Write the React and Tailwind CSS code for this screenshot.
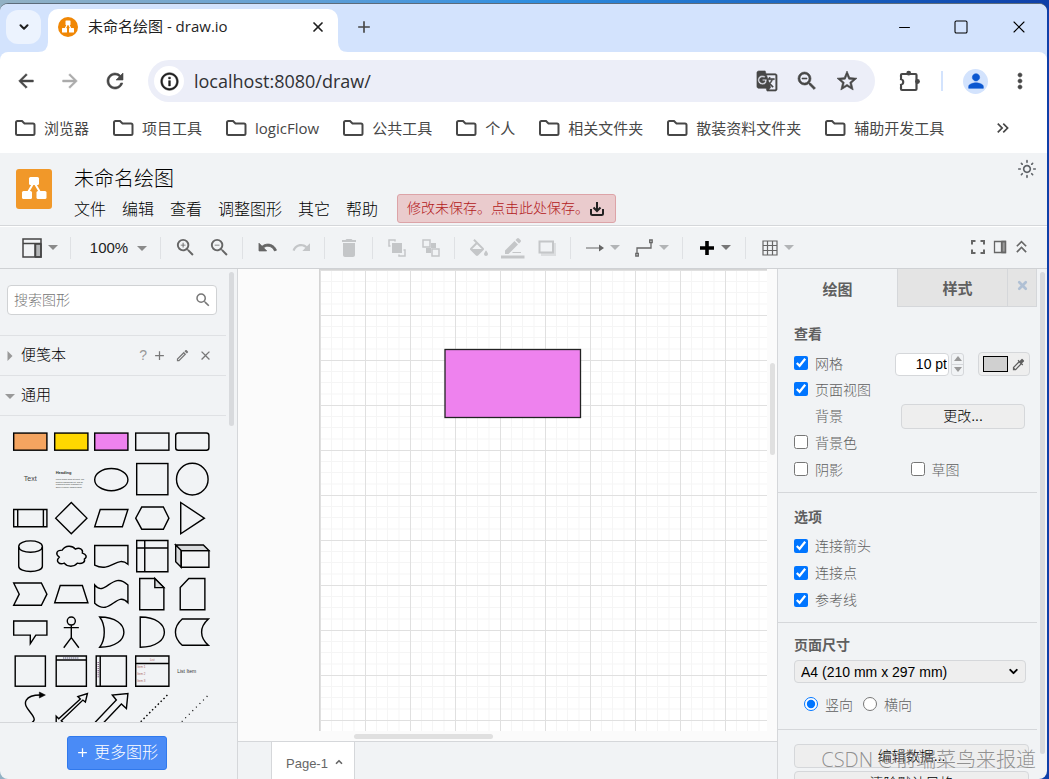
import {
  MdAdd, MdArrowBack, MdArrowForward, MdClose, MdColorize, MdDelete, MdGTranslate, MdInfoOutline,
  MdKeyboardDoubleArrowRight, MdKeyboardDoubleArrowUp, MdMoreVert, MdOutlineEdit, MdOutlineLightMode,
  MdPerson, MdRefresh, MdSearch, MdStarOutline, MdZoomIn, MdZoomOut,
} from 'react-icons/md';
import { ChevronDown, ChevronUp, Minus, Square, X } from 'lucide-react';

const bookmarks = ['浏览器', '项目工具', 'logicFlow', '公共工具', '个人', '相关文件夹', '散装资料文件夹', '辅助开发工具'];
const menus = ['文件', '编辑', '查看', '调整图形', '其它', '帮助'];

const TabFoot = ({ className }) => (
  <svg viewBox="0 0 10 10" className={`absolute bottom-0 size-[10px] fill-white ${className}`}>
    <path d="M0 10 Q10 10 10 0 V10Z" />
  </svg>
);

const Favicon = () => (
  <svg viewBox="0 0 20 20" className="size-5">
    <circle cx="10" cy="10" r="10" fill="#f08705" />
    <path d="M10 6 6.5 13M10 6l3.500 7" stroke="#fff" strokeWidth="1.300" />
    <g fill="#fff">
      <rect x="7.500" y="3.500" width="5" height="4.500" rx=".6" />
      <rect x="4" y="11" width="5" height="4.500" rx=".6" />
      <rect x="11" y="11" width="5" height="4.500" rx=".6" />
    </g>
  </svg>
);

const TabStrip = () => (
  <div className="flex h-12 items-end bg-[#d3e3fd]">
    <button aria-label="搜索标签页" className="mb-2 ml-[6px] flex h-[34px] w-[35px] items-center justify-center rounded-xl bg-[#ecf3fe]">
      <ChevronDown size={14} strokeWidth={3.5} className="text-[#1f1f1f]" />
    </button>
    <div className="relative ml-[7px] flex h-[43px] w-[290px] items-center rounded-t-[10px] bg-white pr-3 pb-2 pl-[10px]">
      <TabFoot className="-left-[10px]" />
      <TabFoot className="-right-[10px] -scale-x-100" />
      <Favicon />
      <span className="ml-[10px] flex-1 truncate text-[15px] text-[#1f1f1f]">未命名绘图 - draw.io</span>
      <button aria-label="关闭标签页"><X size={16} strokeWidth={2.6} className="text-[#1f1f1f]" /></button>
    </div>
    <button aria-label="新标签页" className="mb-[15px] ml-4"><MdAdd size={20} className="text-[#474747]" /></button>
    <div className="mr-5 mb-[15px] ml-auto flex items-center gap-10 text-black">
      <button aria-label="最小化"><Minus size={17} strokeWidth={1.5} /></button>
      <button aria-label="最大化"><Square size={16} strokeWidth={1.6} /></button>
      <button aria-label="关闭"><X size={20} strokeWidth={1.3} className="-mr-[2px]" /></button>
    </div>
  </div>
);

const AddressBar = () => (
  <div className="bg-[#d3e3fd]">
    <div className="flex h-[58px] items-center rounded-t-lg bg-white pl-[15px] text-[#474747] [&_path]:stroke-[0.6] [&_path[fill=none]]:stroke-none">
      <button aria-label="后退"><MdArrowBack size={22} /></button>
      <button aria-label="前进" className="ml-[22px] text-[#ababab]"><MdArrowForward size={22} /></button>
      <button aria-label="重新加载" className="ml-[22px]"><MdRefresh size={24} /></button>
      <div className="ml-[21px] flex h-[42px] flex-1 items-center rounded-full bg-[#eceef8] pr-4 pl-[6px]">
        <span className="flex size-[30px] items-center justify-center rounded-full bg-white text-[#1f1f1f]">
          <MdInfoOutline size={21} />
        </span>
        <input
          aria-label="地址"
          defaultValue="localhost:8080/draw/"
          className="ml-[10px] min-w-0 flex-1 bg-transparent text-[18px] text-[#303134] outline-none"
        />
        <button aria-label="翻译"><MdGTranslate size={22} /></button>
        <button aria-label="缩放" className="ml-[17px]"><MdZoomOut size={24} /></button>
        <button aria-label="收藏" className="ml-4"><MdStarOutline size={24} /></button>
      </div>
      <button aria-label="扩展程序" className="ml-6">
        <svg viewBox="0 0 22 22" className="size-[22px] fill-none stroke-current">
          <g strokeWidth="2.2">
            <rect x="2" y="4" width="15.500" height="16" rx="1" />
          </g>
          <g fill="currentColor" stroke="none">
            <circle cx="9.700" cy="3.200" r="2.400" />
            <circle cx="18.500" cy="11.500" r="2.400" />
          </g>
          <circle cx="2" cy="12" r="3.300" fill="#474747" stroke="none" />
          <rect x="-2" y="7" width="2.900" height="10" fill="#fff" stroke="none" />
          <circle cx="1.200" cy="12" r="2" fill="#fff" stroke="none" />
        </svg>
      </button>
      <span className="ml-5 h-5 w-[2px] bg-[#d3e3fd]" />
      <button aria-label="个人资料" className="ml-5 flex size-[25px] items-center justify-center rounded-full bg-[#d3e3fd] text-[#0b57d0]">
        <MdPerson size={22} />
      </button>
      <button aria-label="菜单" className="mr-[15px] ml-5"><MdMoreVert size={24} /></button>
    </div>
  </div>
);

const Bookmarks = () => (
  <nav className="flex h-[43px] items-center gap-[23px] bg-white pr-[34px] pb-[7px] pl-[14px] text-[15px] text-[#474747]">
    {bookmarks.map((name) => (
      <a key={name} href="#" className="flex shrink-0 items-center gap-2">
        <svg viewBox="0 0 22 18" className="h-[18px] w-[22px] fill-none stroke-current stroke-2">
          <path d="M2 3.500 Q2 2 3.500 2H8l2.500 2.500H19Q20.500 4.500 20.500 6V14.500Q20.500 16 19 16H3.500Q2 16 2 14.500Z" />
        </svg>
        {name}
      </a>
    ))}
    <button aria-label="更多书签" className="ml-auto"><MdKeyboardDoubleArrowRight size={20} /></button>
  </nav>
);

const Header = () => (
  <header className="flex h-[73px] border-b border-[#d5d7da] bg-[#f1f3f5] pl-4">
    <svg viewBox="0 0 36 40" className="mt-4 h-10 w-9">
      <rect width="36" height="40" rx="3" fill="#f19829" />
      <path d="M18 13 11 25M18 13l7 12" stroke="#fff" strokeWidth="2" />
      <g fill="#fff">
        <rect x="13" y="8" width="10" height="8" rx="1.500" />
        <rect x="6" y="22" width="10" height="8" rx="1.500" />
        <rect x="20.500" y="22" width="10" height="8" rx="1.500" />
      </g>
    </svg>
    <div className="ml-[22px] flex-1 pt-[11px]">
      <h1 className="text-[20px] leading-[30px] text-black">未命名绘图</h1>
      <div className="flex h-[29px] items-center">
        <nav className="flex gap-4 pt-[2px] text-[16px] text-black">
          {menus.map((name) => <a key={name} href="#">{name}</a>)}
        </nav>
        <button className="ml-[19px] flex h-[29px] items-center rounded-[3px] border border-[#dca3a7] bg-[#eacbcd] pr-[10px] pl-[9px] text-[14px] text-[#b3191b]">
          修改未保存。点击此处保存。
          <svg viewBox="0 0 16 16" className="size-4 fill-none stroke-[#222] stroke-2">
            <path d="M2 8v4.500Q2 14 3.500 14h9Q14 14 14 12.500V8M8 1v8M4.500 6.500 8 10l3.500-3.500" />
          </svg>
        </button>
      </div>
    </div>
    <button aria-label="外观" className="mt-[6px] mr-[10px] self-start text-[#5f6368]"><MdOutlineLightMode size={20} /></button>
  </header>
);

const Caret = ({ className = 'fill-[#8a8a8a]' }) => (
  <svg viewBox="0 0 10 5" className={`h-[5px] w-[10px] shrink-0 ${className}`}><path d="M0 0H10L5 5Z" /></svg>
);

const Group = ({ children, last }) => (
  <div className={`flex h-[22px] items-center pr-[6px] pl-[7px] ${last ? '' : 'border-r border-[#dfe1e4]'}`}>{children}</div>
);

const Tool = ({ label, children, off }) => (
  <button aria-label={label} className={`flex w-[34px] shrink-0 justify-center ${off ? 'text-[#c4c6c8]' : 'text-[#666]'}`}>{children}</button>
);

const DropTool = ({ label, children, caret }) => (
  <button aria-label={label} className="flex w-[49px] shrink-0 items-center justify-center gap-[6px] text-[#666]">
    {children}
    <Caret className={caret} />
  </button>
);

const Toolbar = () => (
  <div className="flex h-[43px] items-center border-t border-b border-t-white border-b-[#cfd1d4] bg-[#f1f3f5] pl-2">
    <Group>
      <DropTool label="视图">
        <svg viewBox="0 0 20 20" className="size-5 shrink-0 fill-none stroke-[#444] stroke-[1.500]">
          <path d="M13.500 6H19V19H13.500Z" fill="#b4b6b8" />
          <path d="M1 1H19V19H1ZM1 5.500H19M13 5.500V19" />
        </svg>
      </DropTool>
    </Group>
    <Group>
      <button className="flex w-[76px] items-center justify-center gap-[9px] pt-[2px] pl-[5px] text-[15px] text-[#222]">
        100%
        <Caret />
      </button>
    </Group>
    <Group>
      <Tool label="放大"><MdZoomIn size={23} /></Tool>
      <Tool label="缩小"><MdZoomOut size={23} /></Tool>
    </Group>
    <Group>
      <Tool label="撤销">
        <svg viewBox="1 2 22 20" className="h-[17px] w-[19px] fill-current">
          <path d="M12.500 8c-2.650 0-5.050 1-6.900 2.600L2 7v9h9l-3.600-3.600c1.400-1.200 3.100-1.900 5.100-1.900 3.500 0 6.500 2.300 7.600 5.500l2.400-.8C21 11 17.100 8 12.500 8Z" stroke="currentColor" />
        </svg>
      </Tool>
      <Tool label="重做" off>
        <svg viewBox="1 2 22 20" className="h-[17px] w-[19px] -scale-x-100 fill-current">
          <path d="M12.500 8c-2.650 0-5.050 1-6.900 2.600L2 7v9h9l-3.600-3.600c1.400-1.200 3.100-1.900 5.100-1.900 3.500 0 6.500 2.300 7.600 5.500l2.400-.8C21 11 17.100 8 12.500 8Z" />
        </svg>
      </Tool>
    </Group>
    <Group>
      <Tool label="删除" off><MdDelete size={24} /></Tool>
    </Group>
    <Group>
      <Tool label="移至最前" off>
        <svg viewBox="0 0 18 18" className="size-[18px] fill-none stroke-current stroke-[1.500]">
          <path d="M4 4H14V14H4Z" fill="currentColor" stroke="none" />
          <path d="M2.500 7H1V1H7V2.500M15.500 11H17V17H11V15.500" />
        </svg>
      </Tool>
      <Tool label="移至最后" off>
        <svg viewBox="0 0 18 18" className="size-[18px] fill-none stroke-current stroke-[1.500]">
          <path d="M9 4H14V9H9ZM4 9H9V14H4Z" fill="currentColor" stroke="none" />
          <path d="M1 1H8V8H1ZM10 10H17V17H10Z" fill="#f1f3f5" />
        </svg>
      </Tool>
    </Group>
    <Group>
      <Tool label="填充颜色" off>
        <svg viewBox="2 0 20 18" className="h-[18px] w-5 fill-current">
          <path d="M16.560 8.940L7.620 0 6.210 1.410l2.380 2.380-5.150 5.150c-.590.590-.590 1.540 0 2.120l5.500 5.500c.290.290.680.440 1.060.440s.770-.150 1.060-.440l5.500-5.500c.590-.580.590-1.530 0-2.120zM5.210 10L10 5.210 14.790 10H5.210zM19 11.500s-2 2.170-2 3.500c0 1.100.900 2 2 2s2-.900 2-2c0-1.330-2-3.500-2-3.500z" />
        </svg>
      </Tool>
      <Tool label="线条颜色" off>
        <svg viewBox="0 0 24 22" className="h-[22px] w-6 fill-current">
          <path d="M4 13.500 13.500 4l3.500 3.500L7.500 17H4ZM14.500 3 16 1.500q1-1 2 0L19.500 3q1 1 0 2L18 6.500Z" />
          <path d="M12 15H20V16H11Z" />
          <path d="M0 18.500H23.500V21.500H0Z" />
        </svg>
      </Tool>
      <Tool label="阴影" off>
        <svg viewBox="0 0 18 16" className="h-4 w-[18px]">
          <path d="M3 3H18V16H3Z" fill="#dcdee0" />
          <path d="M1.500 1.500H15V12.500H1.500Z" fill="#f1f3f5" stroke="currentColor" strokeWidth="2" />
        </svg>
      </Tool>
    </Group>
    <Group>
      <DropTool label="连接" caret="fill-[#b2b4b6]">
        <svg viewBox="0 0 18 8" className="h-2 w-[18px] shrink-0 fill-current"><path d="M0 3.500H13V.5L18 4l-5 3.500V4.500H0Z" /></svg>
      </DropTool>
      <DropTool label="航点" caret="fill-[#b2b4b6]">
        <svg viewBox="0 0 18 18" className="size-[18px] shrink-0 fill-none stroke-current stroke-[1.300]">
          <path d="M2 14V9H16V4M.8 14.500h2.500V17H.8ZM14.700 1h2.500V3.500h-2.500Z" />
        </svg>
      </DropTool>
    </Group>
    <Group>
      <DropTool label="插入" caret="fill-[#777]">
        <svg viewBox="0 0 16 16" className="size-4 shrink-0 fill-black"><path d="M6.200 1h3.600v5.200H15v3.600H9.800V15H6.200V9.800H1V6.200h5.200Z" /></svg>
      </DropTool>
    </Group>
    <Group last>
      <DropTool label="表格" caret="fill-[#b2b4b6]">
        <svg viewBox="0 0 16 16" className="size-4 shrink-0 fill-none stroke-current stroke-[1.200]">
          <path d="M1 1H15V15H1ZM5.500 1V15M10.500 1V15M1 5.500H15M1 10.500H15" />
        </svg>
      </DropTool>
    </Group>
    <div className="mr-[15px] ml-auto flex items-center gap-1 pb-[2px] text-[#666]">
      <button aria-label="全屏">
        <svg viewBox="0 0 16 16" className="size-4 fill-none stroke-current stroke-2">
          <path d="M2 5.500V2H5.500M10.500 2H14V5.500M14 10.500V14H10.500M5.500 14H2V10.500" />
        </svg>
      </button>
      <button aria-label="格式" className="ml-[3px]">
        <svg viewBox="0 0 14 14" className="size-[14px] fill-none stroke-current stroke-[1.300]">
          <path d="M9 1.500H12.500V12.500H9Z" fill="#999" />
          <path d="M1.500 1.500H12.500V12.500H1.500ZM8.500 1.500V12.500" />
        </svg>
      </button>
      <button aria-label="折叠"><MdKeyboardDoubleArrowUp size={21} /></button>
    </div>
  </div>
);

// every palette entry is drawn in a 40 x 38 cell
const shapes = [
  <rect x="3.500" y="11" width="33" height="17" fill="#f4a460" />,
  <rect x="3.500" y="11" width="33" height="17" fill="#ffd700" />,
  <rect x="3.500" y="11" width="33" height="17" fill="#ee82ee" />,
  <rect x="3.500" y="11" width="33" height="17" />,
  <rect x="3.500" y="11" width="33" height="17" rx="2.500" />,
  <text x="20" y="21" textAnchor="middle" className="fill-[#444] stroke-none text-[7px]">Text</text>,
  <g className="fill-[#333] stroke-none">
    <text x="4.500" y="14" className="text-[4px] font-bold">Heading</text>
    <text className="text-[2px]">
      <tspan x="4.500" y="20">Lorem ipsum dolor sit amet, con</tspan>
      <tspan x="4.500" y="22.500">sectetur adipisicing elit, sed do</tspan>
      <tspan x="4.500" y="25">eiusmod tempor incididunt ut l</tspan>
      <tspan x="4.500" y="27.500">abore et dolore magna aliqua.</tspan>
    </text>
  </g>,
  <ellipse cx="20" cy="19.500" rx="16.500" ry="11" />,
  <rect x="4.500" y="3.500" width="31" height="31" />,
  <circle cx="20" cy="19" r="15.700" />,
  <path d="M3.500 10.500h33v17h-33ZM7.500 10.500v17M33 10.500v17" />,
  <path d="M20 3.500 35.500 19 20 34.500 4.500 19Z" />,
  <path d="M9 10.500H36.500L31 27.500H3.500Z" />,
  <path d="M9.500 8H31l5.500 11L31 30H9.500L3.500 19Z" />,
  <path d="M8.500 3.500 32 19 8.500 34.500Z" />,
  <path d="M8.500 9.500V29c0 7 23.500 7 23.500 0V9.500M8.500 9.500c0-7.500 23.500-7.500 23.500 0S8.500 17 8.500 9.500Z" />,
  <path d="M11 13c-6 0-7 4-3 7-4 4 0 8 5 6 3 4 10 4 13 0 5 1 8-1 7-4 3-2 2-5-2-6 1-4-3-6-7-4-3-4-10-4-13 1Z" />,
  <path d="M3.500 8.500h33V27c-11-9-17 9-33 1Z" />,
  <path d="M4.500 3.500h31v31h-31ZM4.500 11h31M12.500 3.500v31" />,
  <g>
    <path d="M3.500 8H31l5.500 5.500H9L3.500 8V24.500L9 30V13.500Z" fill="#d8dadc" />
    <path d="M9 13.500H36.500V30H9Z" />
  </g>,
  <path d="M3.500 8H31l5.500 11L31 30H3.500l5.500-11Z" />,
  <path d="M9 10.500H31l5.500 17h-33Z" />,
  <path d="M3.500 10C14 23 21-5 36.500 10V27.500C25 15 19 42 3.500 28Z" />,
  <g>
    <path d="M7.500 3.500H22.500L31.500 12.500V34.500H7.500Z" />
    <path d="M22.500 3.500V12.500H31.500Z" fill="#d8dadc" />
  </g>,
  <path d="M16.500 3.500H32.500V34.500H8V12.500Z" />,
  <path d="M3.500 8h33V22H25.500L20 30.500V22H3.500Z" />,
  <path d="M20 12V24.500M12.500 14.500h15M20 24.500 12.500 34.500M20 24.500l7.500 10M24 8a4 4 0 1 1-8 0 4 4 0 0 1 8 0" />,
  <path d="M8.500 4c32 0 32 30 0 30 6-8 6-22 0-30Z" />,
  <path d="M8 4c32 0 32 30 0 30Z" />,
  <path d="M10 6H36c-9 8-9 18 0 26H10c-9-8-9-18 0-26Z" />,
  <rect x="5" y="4" width="30" height="30" />,
  <g>
    <path d="M5 4h30v30H5ZM5 8h30" />
    <path d="M12 6H28" stroke="#668" strokeDasharray="1 1" />
  </g>,
  <g>
    <path d="M5 4h30v30H5ZM9 4v30" />
    <path d="M7 10V26" stroke="#868" strokeDasharray="1 1" />
  </g>,
  <g>
    <path d="M3.500 4h33v30h-33ZM3.500 11.500h33" />
    <g className="fill-[#a66] stroke-none text-[3px]">
      <text x="20" y="9" textAnchor="middle">List</text>
      <text x="5" y="16">Item 1</text>
      <text x="5" y="23">Item 2</text>
      <text x="5" y="30">Item 3</text>
    </g>
  </g>,
  <text x="5" y="20.500" className="fill-[#333] stroke-none text-[5px]">List Item</text>,
  <g>
    <path d="M14 35C38 30 10 20 16 10q3-5 14-5" />
    <path d="M29 2l6 3-6 3Z" fill="#000" strokeWidth=".5" />
  </g>,
  <path d="M5 34V26l2.500 2.500L29 9l-2.500-2.500L36 3.500 34 12l-2.500-2L10 30.500l3 3Z" />,
  <path d="M4 32 25 10l-4-5L36.500 3.500 35 18.500 30 14 9 36" />,
  <path d="M35 5 5 35" strokeDasharray="1.500 2.500" />,
  <path d="M35 6 5 36" strokeDasharray="1 4" strokeWidth="1.200" />,
];

const SideSection = ({ title, open, children }) => (
  <div className="flex h-10 items-center border-b border-[#dfe1e4] pl-[5px] text-[15px] text-black">
    <svg viewBox="0 0 10 10" className="size-[10px] fill-[#999]">
      <path d={open ? 'M0 3H10L5 8Z' : 'M2.500 0 7.500 5 2.500 10Z'} />
    </svg>
    <span className="ml-[6px] flex-1">{title}</span>
    {children}
  </div>
);

const Sidebar = () => (
  <aside className="flex w-[238px] shrink-0 flex-col border-r border-[#d5d7da]">
    <div className="relative min-h-0 flex-1 overflow-hidden pr-[11px]">
      <div className="border-b border-[#dfe1e4] pt-4 pr-[9px] pb-5 pl-[7px]">
        <label className="flex h-[30px] items-center rounded-[4px] border border-[#d0d2d4] bg-white pr-1 pl-[6px]">
          <input aria-label="搜索图形" placeholder="搜索图形" className="min-w-0 flex-1 text-[14px] outline-none placeholder:text-[#757575]" />
          <MdSearch size={18} className="text-[#777]" />
        </label>
      </div>
      <SideSection title="便笺本">
        <div className="flex items-center gap-2 pr-[13px] text-[#777]">
          <button aria-label="帮助" className="-mr-[3px] text-[14px] text-[#999]">?</button>
          <button aria-label="添加"><MdAdd size={15} /></button>
          <button aria-label="编辑"><MdOutlineEdit size={15} /></button>
          <button aria-label="移除"><MdClose size={15} /></button>
        </div>
      </SideSection>
      <SideSection title="通用" open />
      <div className="mt-[6px] ml-[10px] grid h-[306px] w-[203px] grid-cols-5 grid-rows-8">
        {shapes.map((shape, i) => (
          <svg key={i} viewBox="0 0 40 38" className="h-full w-full fill-none stroke-black stroke-[1.400]">{shape}</svg>
        ))}
      </div>
      <div className="absolute top-[3px] right-[3px] h-[154px] w-[5px] rounded-full bg-[#d8dadd]" />
    </div>
    <div className="flex h-[57px] items-center justify-center border-t border-[#d5d7da] pr-1 pt-[3px]">
      <button className="flex h-[34px] w-[100px] items-center justify-center gap-1 rounded-[3px] border border-[#3079ed] bg-[#4a8bf6] text-[16px] text-white">
        <MdAdd size={15} />
        更多图形
      </button>
    </div>
  </aside>
);

const Canvas = () => (
  <main className="flex min-w-0 flex-1 flex-col bg-[#fbfbfb]">
    <div className="relative min-h-0 flex-1 pr-[10px] pb-[10px] pl-[81px]">
      <svg className="h-full w-full border-t border-l border-[#d4d4d4] bg-white">
        <defs>
          <pattern id="grid" width="45" height="45" patternUnits="userSpaceOnUse">
            <path d="M11.500 0V45M22.500 0V45M34 0V45M0 11.500H45M0 22.500H45M0 34H45" stroke="#f5f5f5" />
            <path d="M.5 0V45M0 .5H45" stroke="#e0e0e0" />
          </pattern>
        </defs>
        <rect width="100%" height="100%" fill="url(#grid)" />
        <rect x="125" y="79.500" width="135.500" height="68" fill="#ee82ee" stroke="#222" strokeWidth="1.300" />
      </svg>
      <div className="absolute top-[94px] right-[2px] h-[92px] w-[5px] rounded-full bg-[#e0e0e0]" />
      <div className="absolute bottom-[2px] left-[116px] h-[5px] w-[139px] rounded-full bg-[#e0e0e0]" />
    </div>
    <div className="flex h-[38px] border-t border-[#d5d7da] bg-[#f1f3f5] pl-[33px]">
      <button className="flex items-center gap-[6px] border-x border-[#d5d7da] bg-white pt-[6px] pr-[10px] pl-[14px] text-[13px] text-[#666]">
        Page-1
        <ChevronUp size={10} strokeWidth={4} className="mb-1" />
      </button>
    </div>
  </main>
);

const Check = ({ label, checked }) => (
  <label className="flex items-center gap-[7px]">
    <input type="checkbox" defaultChecked={checked} className="mb-[2px] size-[14px] accent-[#0075ff]" />
    {label}
  </label>
);

const Radio = ({ label, checked }) => (
  <label className="flex items-center gap-[7px]">
    <input type="radio" name="orientation" defaultChecked={checked} className="mb-[2px] size-[14px] accent-[#0075ff]" />
    {label}
  </label>
);

const FormatPanel = () => (
  <aside className="relative w-[270px] shrink-0 overflow-hidden border-l border-[#d5d7da] pr-[10px] text-[14px] text-[#5f5f5f]">
    <div className="flex h-[38px] text-[15px] font-bold">
      <button className="flex-1 pt-1">绘图</button>
      <button className="w-[110px] border-b border-l border-[#d5d7da] bg-[#e4e4e4] pt-[3px] pl-[10px]">样式</button>
      <button aria-label="关闭" className="flex w-[30px] items-center justify-center border-x border-b border-[#d5d7da] bg-[#e4e4e4] pb-1 text-[#b0c0d4]">
        <X size={13} strokeWidth={5} />
      </button>
    </div>
    <section className="border-b border-[#d5d7da] px-4 pt-[15px] pb-[9px]">
      <h2 className="mb-[5px] h-6 leading-6 font-bold">查看</h2>
      <div className="flex h-[26px] items-center">
        <Check label="网格" checked />
        <input
          aria-label="网格大小"
          defaultValue="10 pt"
          className="ml-auto h-[23px] w-[54px] rounded-[4px] border border-[#d5d7da] bg-white pr-px text-right text-black outline-none"
        />
        <div className="ml-[2px] flex h-[23px] w-[13px] flex-col divide-y divide-[#d5d7da] rounded-[3px] border border-[#d5d7da]">
          <button aria-label="增加" className="flex flex-1 items-center justify-center">
            <svg viewBox="0 0 8 5" className="h-[5px] w-2 fill-[#999]"><path d="M0 5H8L4 0Z" /></svg>
          </button>
          <button aria-label="减少" className="flex flex-1 items-center justify-center">
            <svg viewBox="0 0 8 5" className="h-[5px] w-2 fill-[#999]"><path d="M0 0H8L4 5Z" /></svg>
          </button>
        </div>
        <button aria-label="网格颜色" className="-mr-[9px] ml-[14px] flex h-6 w-[52px] items-center gap-[3px] rounded-[4px] border border-[#d5d7da] bg-[#eee] pl-1">
          <span className="h-4 w-[25px] border border-black bg-[#d0d0d0]" />
          <MdColorize size={15} />
        </button>
      </div>
      <div className="flex h-[26px] items-center"><Check label="页面视图" checked /></div>
      <div className="flex h-[26px] items-center justify-between pl-[21px]">
        背景
        <button className="-mr-1 h-[25px] w-[124px] rounded-[4px] border border-[#d5d7da] bg-[#eee] text-black">更改...</button>
      </div>
      <div className="flex h-7 items-center"><Check label="背景色" /></div>
      <div className="grid h-[26px] grid-cols-2 items-center gap-x-[6px]">
        <Check label="阴影" />
        <Check label="草图" />
      </div>
    </section>
    <section className="border-b border-[#d5d7da] px-4 pt-3 pb-2">
      <h2 className="mb-1 h-6 leading-6 font-bold">选项</h2>
      {['连接箭头', '连接点', '参考线'].map((name) => (
        <div key={name} className="flex h-[27px] items-center"><Check label={name} checked /></div>
      ))}
    </section>
    <section className="border-b border-[#d5d7da] pt-[10px] pr-[11px] pb-[11px] pl-4">
      <h2 className="mb-[3px] h-6 leading-6 font-bold">页面尺寸</h2>
      <div className="relative">
        <select aria-label="页面尺寸" className="h-[23px] w-full appearance-none rounded-[4px] border border-[#d5d7da] bg-[#eee] pl-[6px] leading-5 text-black">
          <option>A4 (210 mm x 297 mm)</option>
        </select>
        <ChevronDown size={13} strokeWidth={3.5} className="pointer-events-none absolute top-[5px] right-[6px] text-black" />
      </div>
      <div className="mt-[9px] flex h-[26px] items-center gap-[10px] pl-[10px]">
        <Radio label="竖向" checked />
        <Radio label="横向" />
      </div>
    </section>
    <section className="flex flex-col gap-[3px] pt-[14px] pr-2 pl-4 text-black">
      <button className="h-6 rounded-[4px] border border-[#d5d7da] bg-[#eee]">编辑数据...</button>
      <button className="h-6 rounded-[4px] border border-[#d5d7da] bg-[#eee]">清除默认风格</button>
    </section>
    <div className="absolute top-[3px] right-[2px] h-[482px] w-[5px] rounded-full bg-[#d8dadd]" />
  </aside>
);

export default function App() {
  return (
    <div className="h-screen overflow-hidden bg-linear-to-r from-[#92b1c4] via-[#2f8fe0] to-[#0f3fa8] pt-[3px] pr-[2px] font-['Open_Sans','Noto_Sans_CJK_SC',sans-serif]">
      <div className="relative flex h-full flex-col overflow-hidden rounded-lg border-t border-[#5c6b7a] bg-[#f1f3f5]">
        <TabStrip />
        <AddressBar />
        <Bookmarks />
        <div className="flex min-h-0 flex-1 flex-col font-['Liberation_Sans','Noto_Sans_CJK_SC',sans-serif] font-light">
          <Header />
          <Toolbar />
          <div className="flex min-h-0 flex-1">
            <Sidebar />
            <Canvas />
            <FormatPanel />
          </div>
        </div>
        <div className="pointer-events-none absolute right-[11px] bottom-1 text-[20px] leading-[30px] font-light text-[#777]/80">CSDN @前端菜鸟来报道</div>
      </div>
    </div>
  );
}
